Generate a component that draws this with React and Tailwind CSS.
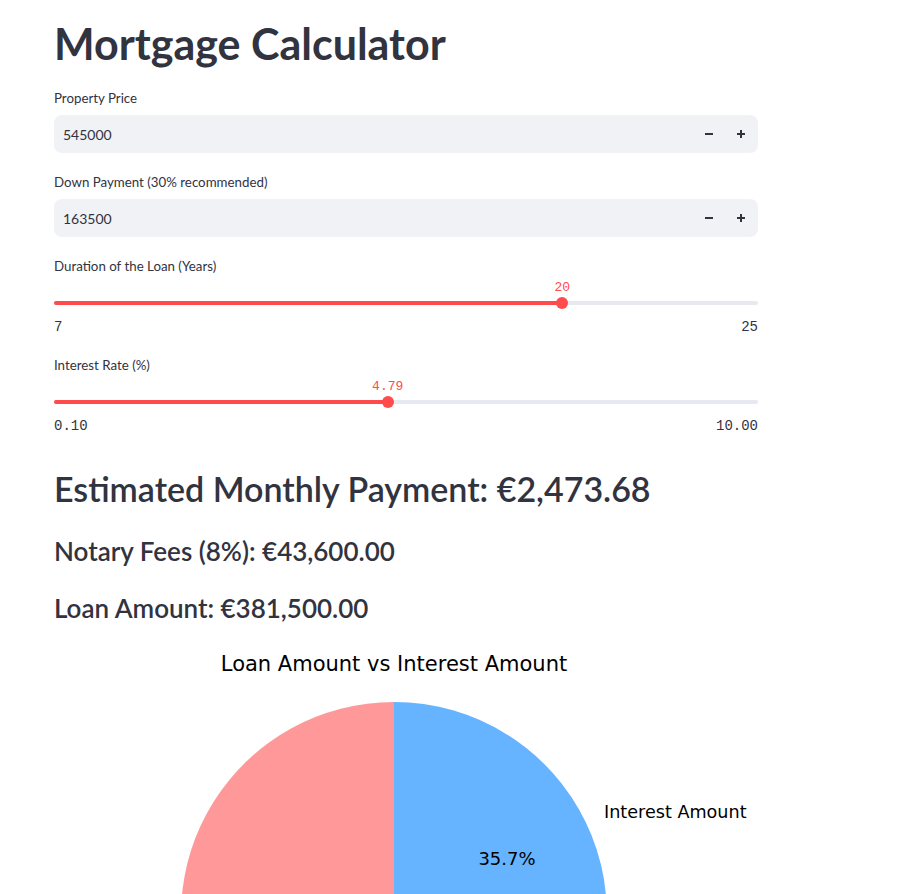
import React from "react";

const sans = { fontFamily: "Lato, 'Noto Sans', sans-serif" };

function Stepper() {
  return (
    <div className="flex items-center h-full pr-[1px]">
      <button className="w-[32px] h-full flex items-center justify-center">
        <svg width="10" height="10" viewBox="0 0 10 10">
          <path d="M1 5h8" stroke="#31333f" strokeWidth="2" />
        </svg>
      </button>
      <button className="w-[32px] h-full flex items-center justify-center">
        <svg width="10" height="10" viewBox="0 0 10 10">
          <path d="M1 5h8M5 1v8" stroke="#31333f" strokeWidth="2" />
        </svg>
      </button>
    </div>
  );
}

function NumberInput({ label, value, top }) {
  return (
    <div className={top}>
      <div className="text-[13.3px] leading-[21px] text-[#31333f]">{label}</div>
      <div className="mt-[6px] h-[38px] rounded-[8px] bg-[#f0f2f6] flex items-center justify-between pl-[9px]">
        <span className="text-[14px] text-[#31333f]">{value}</span>
        <Stepper />
      </div>
    </div>
  );
}

function Slider({ label, value, min, max, pct, top }) {
  return (
    <div className={top}>
      <div className="text-[13.3px] leading-[21px] text-[#31333f]">{label}</div>
      <div className="relative h-[20px]">
        <span
          className="absolute top-[3px] -translate-x-1/2 text-[13px] leading-[16px] text-[#ff4b4b] font-['Liberation_Mono',monospace]"
          style={{ left: `${pct}%` }}
        >
          {value}
        </span>
      </div>
      <div className="relative h-[12px] flex items-center">
        <div className="w-full h-[4px] rounded-full bg-[#e6e9ef]">
          <div className="h-full rounded-full bg-[#ff4b4b]" style={{ width: `${pct}%` }} />
        </div>
        <div
          className="absolute top-0 w-[12px] h-[12px] -ml-[6px] rounded-full bg-[#ff4b4b]"
          style={{ left: `${pct}%` }}
        />
      </div>
      <div className="mt-[10px] flex justify-between text-[14px] leading-[16px] text-[#31333f] font-['Liberation_Mono',monospace]">
        <span>{min}</span>
        <span>{max}</span>
      </div>
    </div>
  );
}

function PieChart() {
  const cx = 340;
  const cy = 275;
  const r = 213;
  const dejavu = "'DejaVu Sans', sans-serif";
  return (
    <svg width="704" height="400" className="block">
      <text x={cx} y="24" textAnchor="middle" dominantBaseline="central" fontSize="21" fontFamily={dejavu} fill="#000">
        Loan Amount vs Interest Amount
      </text>
      <path d={`M${cx} ${cy} L506.6 407.7 A${r} ${r} 0 1 1 ${cx} ${cy - r} Z`} fill="#ff9999" />
      <path d={`M${cx} ${cy} L${cx} ${cy - r} A${r} ${r} 0 0 1 506.6 407.7 Z`} fill="#66b3ff" />
      <text x="550" y="172" textAnchor="start" dominantBaseline="central" fontSize="17.6" fontFamily={dejavu} fill="#000">
        Interest Amount
      </text>
      <text x="453" y="218" textAnchor="middle" dominantBaseline="central" fontSize="18" fontFamily={dejavu} fill="#000">
        35.7%
      </text>
    </svg>
  );
}

export default function App() {
  return (
    <div className="bg-white min-h-screen overflow-hidden" style={sans}>
      <div className="pl-[54px] w-[758px] text-[#31333f]">
        <h1 className="pt-[17px] text-[43px] leading-[53px] font-bold">Mortgage Calculator</h1>

        <NumberInput label="Property Price" value="545000" top="mt-[18px]" />
        <NumberInput label="Down Payment (30% recommended)" value="163500" top="mt-[19px]" />

        <Slider label="Duration of the Loan (Years)" value="20" min="7" max="25" pct={72.2} top="mt-[19px]" />
        <Slider label="Interest Rate (%)" value="4.79" min="0.10" max="10.00" pct={47.4} top="mt-[20px]" />

        <h2 className="mt-[33px] text-[34px] leading-[43px] font-semibold">
          Estimated Monthly Payment: €2,473.68
        </h2>
        <h3 className="mt-[24px] text-[26px] leading-[34px] font-semibold">Notary Fees (8%): €43,600.00</h3>
        <h3 className="mt-[23px] text-[26px] leading-[34px] font-semibold">Loan Amount: €381,500.00</h3>

        <div className="mt-[15px]">
          <PieChart />
        </div>
      </div>
    </div>
  );
}
